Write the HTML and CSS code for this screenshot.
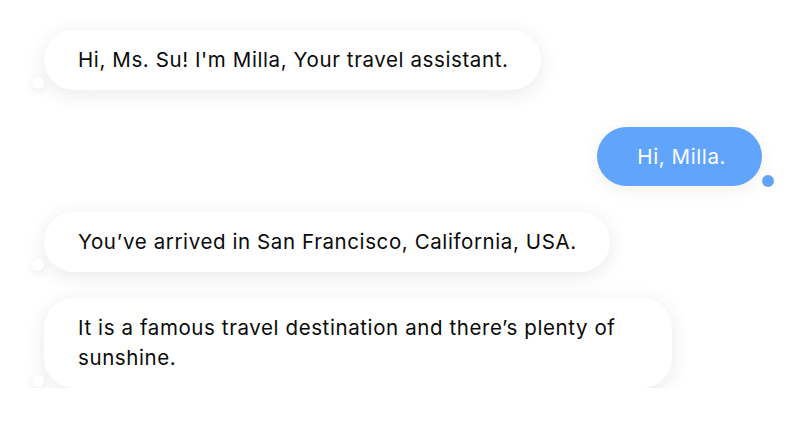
FILE: index.html
```html
<!DOCTYPE html>
<html>
<head>
<meta charset="utf-8">
<link rel="stylesheet" href="styles.css">
</head>
<body>
<div class="chat">
  <div class="msg bot">Hi, Ms. Su! I'm Milla, Your travel assistant.<span class="dot"></span></div>
  <div class="msg user">Hi, Milla.<span class="dot"></span></div>
  <div class="msg bot">You’ve arrived in San Francisco, California, USA.<span class="dot"></span></div>
  <div class="msg bot">It is a famous travel destination and there’s plenty of sunshine.<span class="dot"></span></div>
</div>
</body>
</html>
```
FILE: styles.css
```css
html, body {
  margin: 0;
  background: #ffffff;
}
.chat {
  display: flex;
  flex-direction: column;
  align-items: flex-start;
  padding: 30px 38px 0 44px;
  gap: 26px;
  font-family: Inter, "Liberation Sans", sans-serif;
  font-size: 20.5px;
  letter-spacing: 0.6px;
  line-height: 30px;
  color: #0a0a0a;
}
.msg {
  position: relative;
  box-sizing: border-box;
  max-width: 628px;
  padding: 15px 33px 15px 34px;
  border-radius: 30px;
  background: #ffffff;
  box-shadow: 0 4px 20px rgba(0, 0, 0, 0.09);
}
.msg .dot {
  position: absolute;
  width: 12px;
  height: 12px;
  border-radius: 50%;
  background: #ffffff;
  left: -12px;
  bottom: 1px;
  box-shadow: 0 2px 8px rgba(0, 0, 0, 0.09);
}
.user {
  align-self: flex-end;
  margin-top: 11px;
  background: #61a4fc;
  color: #ffffff;
  padding: 15px 36px 14px 40px;
  box-shadow: 0 4px 18px rgba(0, 0, 0, 0.06);
}
.user .dot {
  left: auto;
  right: -12px;
  bottom: -1px;
  background: #61a4fc;
  box-shadow: none;
}
```
